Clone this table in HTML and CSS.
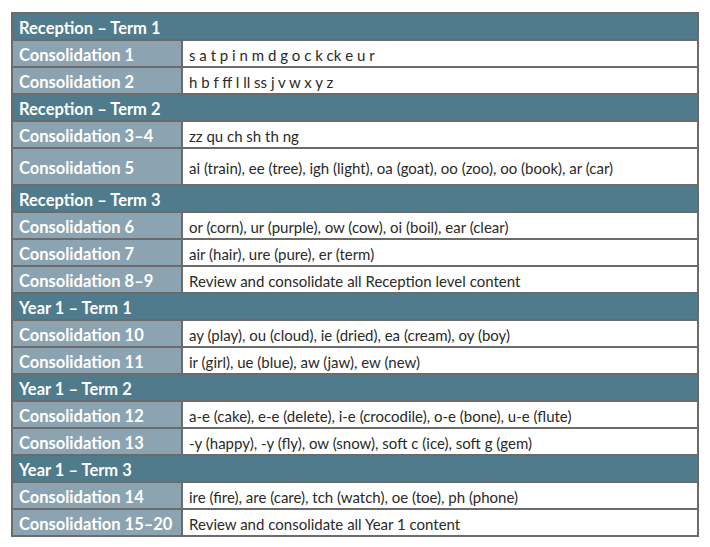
FILE: index.html
```html
<!DOCTYPE html>
<html>
<head>
<meta charset="utf-8">
<link rel="stylesheet" href="styles.css">
</head>
<body>
<table class="plan">
  <colgroup><col class="col-label"><col class="col-content"></colgroup>
  <tr class="term"><th colspan="2">Reception – Term 1</th></tr>
  <tr><td class="label">Consolidation 1</td><td class="content">s a t p i n m d g o c k ck e u r</td></tr>
  <tr><td class="label">Consolidation 2</td><td class="content">h b f ff l ll ss j v w x y z</td></tr>
  <tr class="term"><th colspan="2">Reception – Term 2</th></tr>
  <tr><td class="label">Consolidation 3–4</td><td class="content">zz qu ch sh th ng</td></tr>
  <tr class="tall"><td class="label">Consolidation 5</td><td class="content">ai (train), ee (tree), igh (light), oa (goat), oo (zoo), oo (book), ar (car)</td></tr>
  <tr class="term"><th colspan="2">Reception – Term 3</th></tr>
  <tr><td class="label">Consolidation 6</td><td class="content">or (corn), ur (purple), ow (cow), oi (boil), ear (clear)</td></tr>
  <tr><td class="label">Consolidation 7</td><td class="content">air (hair), ure (pure), er (term)</td></tr>
  <tr><td class="label">Consolidation 8–9</td><td class="content">Review and consolidate all Reception level content</td></tr>
  <tr class="term"><th colspan="2">Year 1 – Term 1</th></tr>
  <tr><td class="label">Consolidation 10</td><td class="content">ay (play), ou (cloud), ie (dried), ea (cream), oy (boy)</td></tr>
  <tr><td class="label">Consolidation 11</td><td class="content">ir (girl), ue (blue), aw (jaw), ew (new)</td></tr>
  <tr class="term"><th colspan="2">Year 1 – Term 2</th></tr>
  <tr><td class="label">Consolidation 12</td><td class="content">a-e (cake), e-e (delete), i-e (crocodile), o-e (bone), u-e (flute)</td></tr>
  <tr><td class="label">Consolidation 13</td><td class="content">-y (happy), -y (fly), ow (snow), soft c (ice), soft g (gem)</td></tr>
  <tr class="term"><th colspan="2">Year 1 – Term 3</th></tr>
  <tr><td class="label">Consolidation 14</td><td class="content">ire (fire), are (care), tch (watch), oe (toe), ph (phone)</td></tr>
  <tr><td class="label">Consolidation 15–20</td><td class="content">Review and consolidate all Year 1 content</td></tr>
</table>
</body>
</html>
```
FILE: styles.css
```css
html, body {
  margin: 0;
  background: #ffffff;
}
body {
  padding: 12px 11px;
  font-family: Lato, "Open Sans", sans-serif;
}
.plan {
  width: 688px;
  border-collapse: collapse;
  table-layout: fixed;
}
.col-label {
  width: 170px;
}
.plan th, .plan td {
  border: 2px solid #6b6b6b;
  padding: 2px 6px 0;
  text-align: left;
  vertical-align: middle;
  white-space: nowrap;
}
.plan tr {
  height: 27px;
}
.plan tr.tall {
  height: 37px;
}
.term th {
  background: #4f7b8c;
  color: #ffffff;
  font-weight: 700;
  font-size: 16.5px;
}
.label {
  background: #8ca4b1;
  color: #ffffff;
  font-weight: 700;
  font-size: 16.5px;
}
.content {
  background: #ffffff;
  color: #2a2a2a;
  font-size: 15px;
}
```
